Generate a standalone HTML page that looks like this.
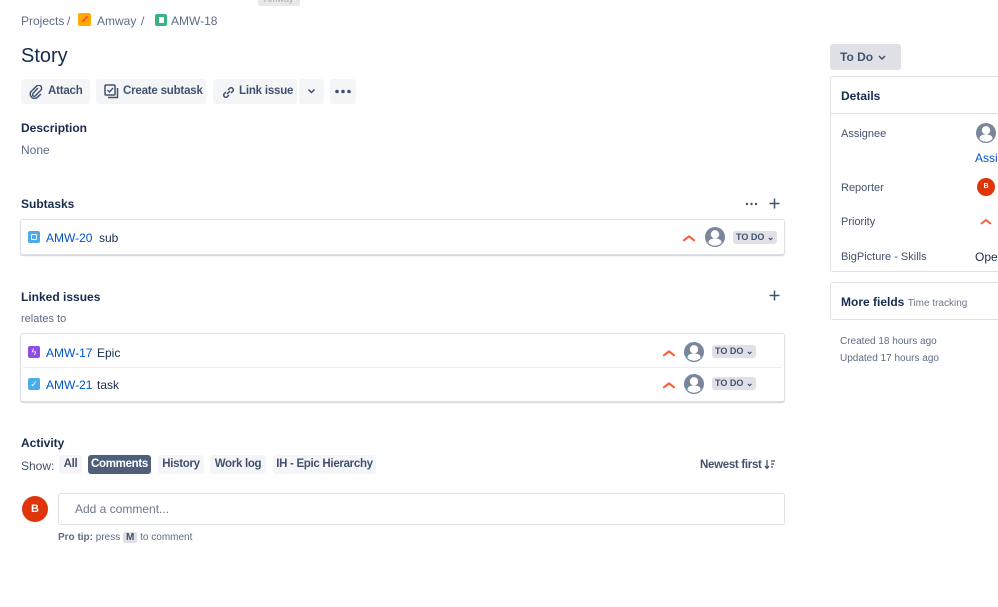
<!DOCTYPE html>
<html><head><meta charset="utf-8"><style>
*{box-sizing:border-box;margin:0;padding:0}
body{width:998px;height:607px;background:#fff;font-family:"Liberation Sans",Arial,sans-serif;color:#172b4d;font-size:12px;position:relative;overflow:hidden}
.a{position:absolute;white-space:nowrap}
.btn{position:absolute;background:#f4f5f7;border-radius:3px;height:25px;line-height:25px;font-weight:bold;color:#42526e;font-size:11.5px;letter-spacing:-0.2px;padding:0 8px;white-space:nowrap}
.gray{color:#5e6c84}
.link{color:#0052cc}
.card{position:absolute;border:1px solid #dfe1e6;border-radius:3px;box-shadow:0 1px 1px rgba(9,30,66,.2);background:#fff}
.st{position:absolute;background:#dfe1e6;border-radius:3px;font-size:9px;font-weight:bold;color:#42526e;height:13px;line-height:13px;padding:0 3px;white-space:nowrap}
.pill{position:absolute;top:455px;height:19px;line-height:19px;background:#f4f5f7;border-radius:3px;text-align:center;font-weight:bold;color:#42526e;white-space:nowrap;font-size:11.5px;letter-spacing:-0.3px}
</style></head><body>
<svg width="0" height="0" style="position:absolute"><defs>
<symbol id="av" viewBox="0 0 20 20"><circle cx="10" cy="10" r="10" fill="#7a869a"/><circle cx="10" cy="7.3" r="4.2" fill="#fff"/><path d="M3.5 15.5c0-2.8 2.8-4 6.5-4s6.5 1.2 6.5 4v0.5a9 9 0 0 1-13 0z" fill="#fff"/></symbol>
<symbol id="pr" viewBox="0 0 12 8"><path d="M1.5 6.5L6 3 10.5 6.5" stroke="#ff5630" stroke-width="1.8" fill="none" stroke-linecap="round"/></symbol>
</defs></svg>
<div class="a" style="left:258px;top:-8px;background:#e8e8e8;color:#aaa;font-size:9px;padding:2px 6px;border-radius:2px">Amway</div>
<div class="a gray" style="left:21px;top:14px">Projects</div>
<div class="a gray" style="left:67px;top:14px">/</div>
<div class="a" style="left:78px;top:13px;width:13px;height:13px;background:#ffab00;border-radius:2px"><div style="position:absolute;left:3px;top:5px;width:8px;height:2px;background:#ff5630;transform:rotate(-45deg)"></div></div>
<div class="a gray" style="left:97px;top:14px">Amway</div>
<div class="a gray" style="left:141px;top:14px">/</div>
<div class="a" style="left:155px;top:14px;width:12px;height:12px;background:#36b37e;border-radius:2px"><div style="position:absolute;left:3.5px;top:2.5px;width:5px;height:6px;background:#fff"></div></div>
<div class="a gray" style="left:171px;top:14px">AMW-18</div>
<div class="a" style="left:21px;top:45px;font-size:20px">Story</div>
<div class="btn" style="left:21px;top:79px;width:69px;padding-left:27px">Attach</div>
<svg class="a" style="left:29px;top:85px" width="14" height="14" viewBox="0 0 14 14"><path d="M9 3L4 8.5a1.6 1.6 0 0 0 2.3 2.3L12 5a3 3 0 0 0-4.2-4.2L2 6.6a4.3 4.3 0 0 0 6 6L12 9" stroke="#42526e" stroke-width="1.5" fill="none"/></svg>
<div class="btn" style="left:96px;top:79px;width:110px;padding-left:27px">Create subtask</div>
<svg class="a" style="left:104px;top:84px" width="15" height="15" viewBox="0 0 15 15"><rect x="1" y="1" width="10" height="10" rx="1" stroke="#42526e" stroke-width="1.5" fill="none"/><path d="M3.5 6l2 2 3.5-4" stroke="#42526e" stroke-width="1.4" fill="none"/><path d="M4 13.5h9.5V4" stroke="#42526e" stroke-width="1.5" fill="none"/></svg>
<div class="btn" style="left:213px;top:79px;width:84px;padding-left:26px">Link issue</div>
<svg class="a" style="left:221px;top:85px" width="15" height="15" viewBox="0 0 15 15"><path d="M6 9l3-3M5 7L3 9a2.2 2.2 0 0 0 3 3l2-2M10 8l2-2a2.2 2.2 0 0 0-3-3L7 5" stroke="#42526e" stroke-width="1.5" fill="none"/></svg>
<div class="btn" style="left:299px;top:79px;width:25px"></div>
<svg class="a" style="left:307px;top:88px" width="9" height="6" viewBox="0 0 9 6"><path d="M1.5 1.5l3 3 3-3" stroke="#42526e" stroke-width="1.5" fill="none"/></svg>
<div class="btn" style="left:330px;top:79px;width:26px;padding:0"></div>
<svg class="a" style="left:334px;top:89px" width="18" height="5"><circle cx="3" cy="2.5" r="1.8" fill="#42526e"/><circle cx="9" cy="2.5" r="1.8" fill="#42526e"/><circle cx="15" cy="2.5" r="1.8" fill="#42526e"/></svg>
<div class="a" style="left:21px;top:121px;font-weight:bold">Description</div>
<div class="a gray" style="left:21px;top:143px">None</div>
<div class="a" style="left:21px;top:197px;font-weight:bold">Subtasks</div>
<svg class="a" style="left:745px;top:202px" width="13" height="4"><circle cx="2" cy="2" r="1.2" fill="#42526e"/><circle cx="6.5" cy="2" r="1.2" fill="#42526e"/><circle cx="11" cy="2" r="1.2" fill="#42526e"/></svg>
<svg class="a" style="left:769px;top:198px" width="11" height="11"><path d="M5.5 0.5v10M0.5 5.5h10" stroke="#42526e" stroke-width="1.5"/></svg>
<div class="card" style="left:20px;top:219px;width:765px;height:36px">
<div class="a" style="left:7px;top:11px;width:12px;height:12px;background:#4bade8;border-radius:2px"><div style="position:absolute;left:3px;top:3px;width:6px;height:6px;border:1.5px solid #fff;border-radius:1px"></div></div>
<div class="a link" style="left:25px;top:11px">AMW-20</div>
<div class="a" style="left:78px;top:11px">sub</div>
<svg class="a" style="left:661px;top:13px" width="14" height="9"><use href="#pr"/></svg>
<svg class="a" style="left:684px;top:7px" width="20" height="20"><use href="#av"/></svg>
<div class="st" style="left:712px;top:11px">TO DO ⌄</div>
</div>
<div class="a" style="left:21px;top:290px;font-weight:bold">Linked issues</div>
<svg class="a" style="left:769px;top:290px" width="11" height="11"><path d="M5.5 0.5v10M0.5 5.5h10" stroke="#42526e" stroke-width="1.5"/></svg>
<div class="a gray" style="left:21px;top:313px;font-size:11px">relates to</div>
<div class="card" style="left:20px;top:333px;width:765px;height:69px">
<div class="a" style="left:7px;top:12px;width:12px;height:12px;background:#904ee2;border-radius:2px;color:#fff;font-size:9px;text-align:center;line-height:12px">ϟ</div>
<div class="a link" style="left:25px;top:12px">AMW-17</div>
<div class="a" style="left:76px;top:12px">Epic</div>
<svg class="a" style="left:641px;top:14px" width="14" height="9"><use href="#pr"/></svg>
<svg class="a" style="left:663px;top:8px" width="20" height="20"><use href="#av"/></svg>
<div class="st" style="left:691px;top:11px">TO DO ⌄</div>
<div class="a" style="left:2px;right:2px;top:33px;height:1px;background:#ebecf0"></div>
<div class="a" style="left:7px;top:44px;width:12px;height:12px;background:#4bade8;border-radius:2px;color:#fff;font-size:9px;text-align:center;line-height:12px">✓</div>
<div class="a link" style="left:25px;top:44px">AMW-21</div>
<div class="a" style="left:76px;top:44px">task</div>
<svg class="a" style="left:641px;top:46px" width="14" height="9"><use href="#pr"/></svg>
<svg class="a" style="left:663px;top:40px" width="20" height="20"><use href="#av"/></svg>
<div class="st" style="left:691px;top:43px">TO DO ⌄</div>
</div>
<div class="a" style="left:21px;top:436px;font-weight:bold">Activity</div>
<div class="a" style="left:21px;top:459px;color:#42526e">Show:</div>
<div class="pill" style="left:59px;width:23px">All</div>
<div class="pill" style="left:88px;width:63px;background:#505f79;color:#fff">Comments</div>
<div class="pill" style="left:158px;width:46px">History</div>
<div class="pill" style="left:210px;width:56px">Work log</div>
<div class="pill" style="left:273px;width:103px">IH - Epic Hierarchy</div>
<div class="a" style="left:700px;top:459px;font-weight:bold;color:#42526e;font-size:11.5px;letter-spacing:-0.3px">Newest first</div>
<svg class="a" style="left:764px;top:459px" width="12" height="11"><path d="M3 1v8M1 7l2 2.5L5 7M7 2h4M7 5h3M7 8h2" stroke="#42526e" stroke-width="1.3" fill="none"/></svg>
<div class="a" style="left:22px;top:496px;width:26px;height:26px;border-radius:50%;background:#de350b;color:#fff;font-weight:bold;font-size:11px;text-align:center;line-height:26px">B</div>
<div class="a" style="left:58px;top:493px;width:727px;height:32px;border:1px solid #dfe1e6;border-radius:3px;color:#6b778c;font-size:12px;line-height:30px;padding-left:16px">Add a comment...</div>
<div class="a gray" style="left:58px;top:532px;font-size:10px"><b>Pro tip:</b> press <span style="background:#dfe1e6;padding:0 3px;border-radius:2px;font-weight:bold;color:#42526e">M</span> to comment</div>
<div class="a" style="left:830px;top:44px;width:71px;height:26px;background:#dfe1e6;border-radius:3px;font-weight:bold;color:#42526e;line-height:26px;padding-left:10px">To Do</div>
<svg class="a" style="left:878px;top:55px" width="8" height="5"><path d="M1 1l3 3 3-3" stroke="#42526e" stroke-width="1.5" fill="none"/></svg>
<div class="a" style="left:830px;top:76px;width:180px;height:196px;border:1px solid #dfe1e6;border-radius:3px"></div>
<div class="a" style="left:831px;top:113px;width:170px;height:1px;background:#dfe1e6"></div>
<div class="a" style="left:841px;top:89px;font-weight:bold">Details</div>
<div class="a" style="left:841px;top:128px;font-size:11px;color:#42526e">Assignee</div>
<svg class="a" style="left:976px;top:123px" width="20" height="20"><use href="#av"/></svg>
<div class="a link" style="left:975px;top:151px">Assig</div>
<div class="a" style="left:841px;top:182px;font-size:11px;color:#42526e">Reporter</div>
<div class="a" style="left:977px;top:178px;width:18px;height:18px;border-radius:50%;background:#de350b;color:#fff;font-size:7px;font-weight:bold;text-align:center;line-height:18px">B</div>
<div class="a" style="left:841px;top:216px;font-size:11px;color:#42526e">Priority</div>
<svg class="a" style="left:980px;top:217px" width="12" height="8"><use href="#pr"/></svg>
<div class="a" style="left:841px;top:251px;font-size:11px;color:#42526e">BigPicture - Skills</div>
<div class="a" style="left:975px;top:250px">Oper</div>
<div class="a" style="left:830px;top:282px;width:180px;height:38px;border:1px solid #dfe1e6;border-radius:3px"></div>
<div class="a" style="left:841px;top:295px;font-weight:bold">More fields <span style="font-weight:normal;color:#6b778c;font-size:10px">Time tracking</span></div>
<div class="a gray" style="left:840px;top:336px;font-size:10px">Created 18 hours ago</div>
<div class="a gray" style="left:840px;top:353px;font-size:10px">Updated 17 hours ago</div>
</body></html>
